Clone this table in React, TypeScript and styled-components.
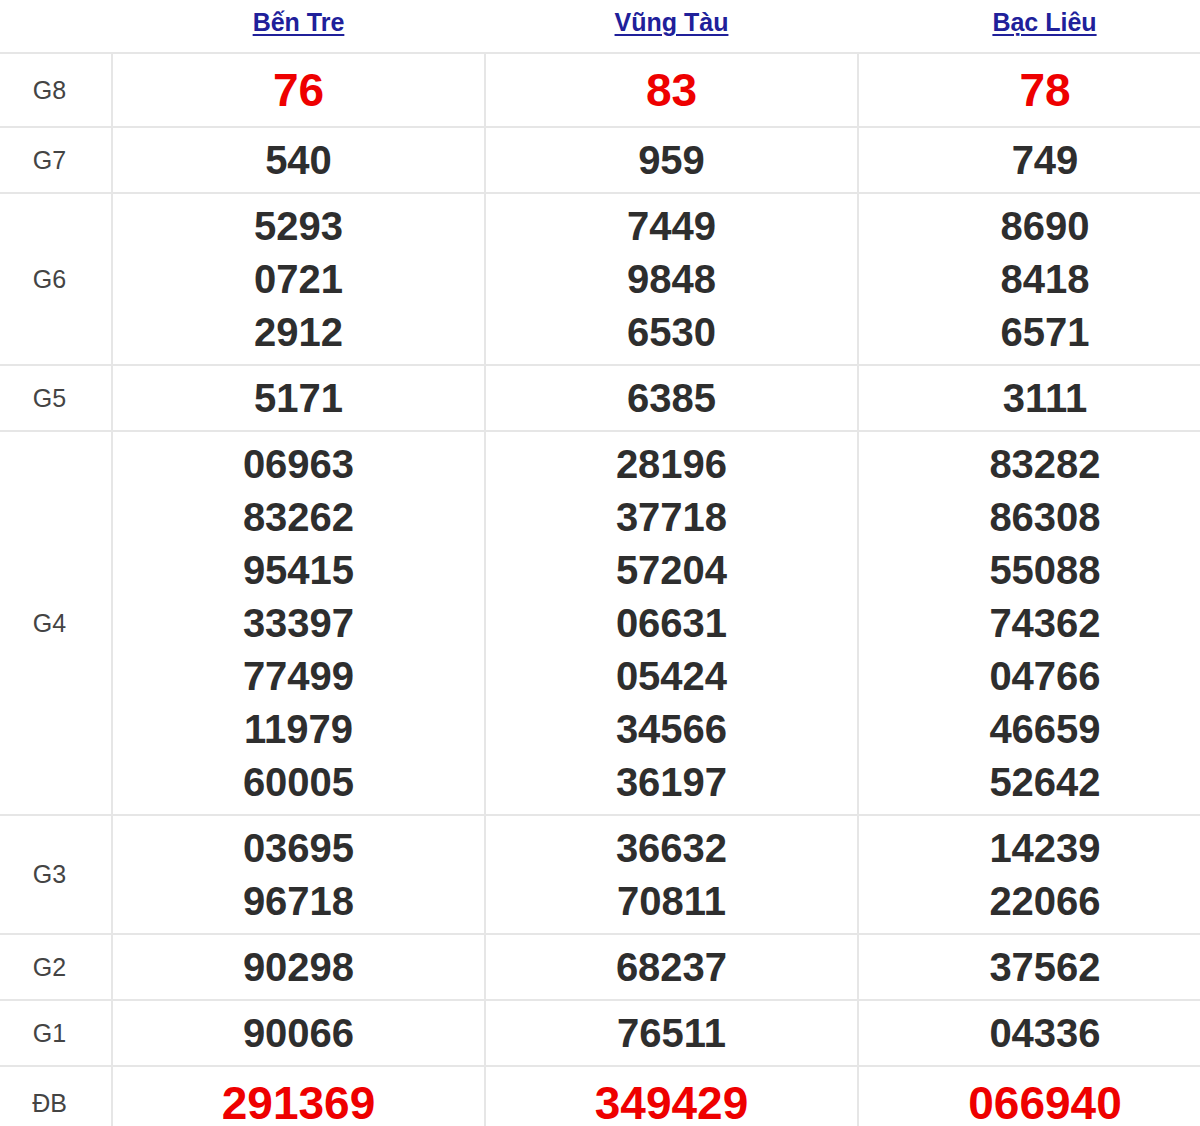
import styled, { createGlobalStyle } from 'styled-components';

const GlobalStyle = createGlobalStyle`
  html, body {
    margin: 0;
    padding: 0;
    background: #fff;
    overflow: hidden;
  }
  body {
    font-family: "Liberation Sans", Arial, sans-serif;
  }
`;

type Prize = {
  label: string;
  values: readonly (readonly string[])[];
  big?: boolean;
};

const provinces = ['Bến Tre', 'Vũng Tàu', 'Bạc Liêu'] as const;

const prizes: readonly Prize[] = [
  { label: 'G8', big: true, values: [['76'], ['83'], ['78']] },
  { label: 'G7', values: [['540'], ['959'], ['749']] },
  {
    label: 'G6',
    values: [
      ['5293', '0721', '2912'],
      ['7449', '9848', '6530'],
      ['8690', '8418', '6571'],
    ],
  },
  { label: 'G5', values: [['5171'], ['6385'], ['3111']] },
  {
    label: 'G4',
    values: [
      ['06963', '83262', '95415', '33397', '77499', '11979', '60005'],
      ['28196', '37718', '57204', '06631', '05424', '34566', '36197'],
      ['83282', '86308', '55088', '74362', '04766', '46659', '52642'],
    ],
  },
  {
    label: 'G3',
    values: [
      ['03695', '96718'],
      ['36632', '70811'],
      ['14239', '22066'],
    ],
  },
  { label: 'G2', values: [['90298'], ['68237'], ['37562']] },
  { label: 'G1', values: [['90066'], ['76511'], ['04336']] },
  { label: 'ĐB', big: true, values: [['291369'], ['349429'], ['066940']] },
];

const Table = styled.table`
  width: 1231px;
  border-collapse: collapse;
  table-layout: fixed;
`;

const HeadCell = styled.th`
  height: 44px;
  padding: 0 0 8px;
  text-align: center;
  vertical-align: middle;
  font-weight: 700;
  font-size: 25px;
`;

const ProvinceLink = styled.a`
  color: #20209a;
  text-decoration: underline;
  text-underline-offset: 3px;
  text-decoration-thickness: 2px;
`;

const LabelCell = styled.td`
  padding: 0 12px 0 0;
  border-top: 2px solid #e6e6e6;
  text-align: center;
  vertical-align: middle;
  color: #444;
  font-size: 25px;
`;

const NumCell = styled.td`
  padding: 6px 0 5px;
  border-top: 2px solid #e6e6e6;
  border-left: 2px solid #e6e6e6;
  text-align: center;
  vertical-align: middle;
`;

const Num = styled.div<{ $big?: boolean }>`
  font-weight: 700;
  font-size: ${({ $big }) => ($big ? '46px' : '40px')};
  line-height: ${({ $big }) => ($big ? '61px' : '53px')};
  color: ${({ $big }) => ($big ? '#ee0000' : '#2e2e2e')};
`;

export default function App() {
  return (
    <>
      <GlobalStyle />
      <Table>
        <colgroup>
          <col style={{ width: 112 }} />
          <col />
          <col />
          <col />
        </colgroup>
        <thead>
          <tr>
            <HeadCell />
            {provinces.map((name) => (
              <HeadCell key={name}>
                <ProvinceLink href="#">{name}</ProvinceLink>
              </HeadCell>
            ))}
          </tr>
        </thead>
        <tbody>
          {prizes.map((prize) => (
            <tr key={prize.label}>
              <LabelCell>{prize.label}</LabelCell>
              {prize.values.map((col, i) => (
                <NumCell key={i}>
                  {col.map((v) => (
                    <Num key={v} $big={prize.big}>
                      {v}
                    </Num>
                  ))}
                </NumCell>
              ))}
            </tr>
          ))}
        </tbody>
      </Table>
    </>
  );
}
